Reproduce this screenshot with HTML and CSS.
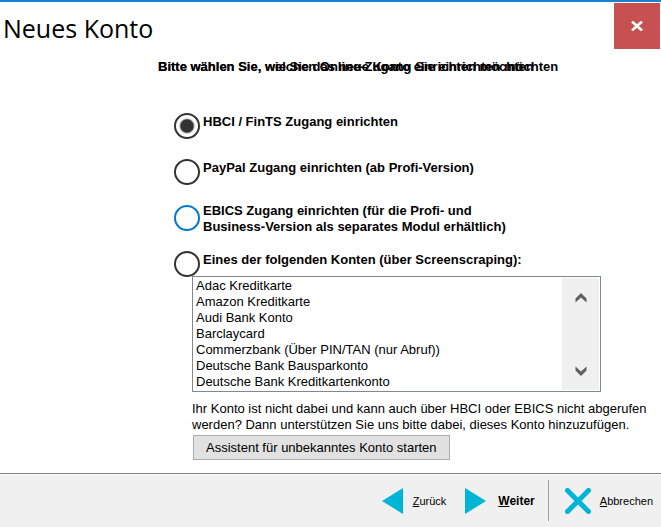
FILE: index.html
```html
<!DOCTYPE html>
<html lang="de">
<head>
  <meta charset="UTF-8">
  <title>Neues Konto</title>
  <link rel="stylesheet" href="styles.css">
</head>
<body>

  <header class="titlebar">
    <h1>Neues Konto</h1>
    <button class="close" type="button" aria-label="Schließen">
      <svg width="12" height="10" viewBox="0 0 12 10"><path d="M1 0.5L11 9.5M11 0.5L1 9.5" stroke="#fff" stroke-width="2.6"/></svg>
    </button>
  </header>

  <main>
    <!-- both page captions share one line -->
    <div class="captions">
      <p>Bitte wählen Sie, welchen Online-Zugang Sie einrichten möchten</p>
      <p>Bitte wählen Sie, wie Sie das neue Konto einrichten möchten</p>
    </div>

    <div class="options">
      <div class="option">
        <input type="radio" name="access" id="hbci" checked>
        <label for="hbci">HBCI / FinTS Zugang einrichten</label>
      </div>
      <div class="option">
        <input type="radio" name="access" id="paypal">
        <label for="paypal">PayPal Zugang einrichten (ab Profi-Version)</label>
      </div>
      <div class="option two-lines">
        <input type="radio" name="access" id="ebics" class="hot">
        <label for="ebics">EBICS Zugang einrichten (für die Profi- und<br>Business-Version als separates Modul erhältlich)</label>
      </div>
      <div class="option">
        <input type="radio" name="access" id="scraping">
        <label for="scraping" id="scraping-label">Eines der folgenden Konten (über Screenscraping):</label>
      </div>
    </div>

    <div class="accounts">
      <div class="listbox">
        <select size="7" aria-labelledby="scraping-label">
          <option>Adac Kreditkarte</option>
          <option>Amazon Kreditkarte</option>
          <option>Audi Bank Konto</option>
          <option>Barclaycard</option>
          <option>Commerzbank (Über PIN/TAN (nur Abruf))</option>
          <option>Deutsche Bank Bausparkonto</option>
          <option>Deutsche Bank Kreditkartenkonto</option>
        </select>
        <div class="scroller">
          <button type="button" aria-label="Nach oben">
            <svg width="12" height="10" viewBox="0 0 12 10"><path d="M0.5 5.5L6 0L11.5 5.5V9.5L6 4.5L0.5 9.5Z" fill="#606060"/></svg>
          </button>
          <button type="button" aria-label="Nach unten">
            <svg width="12" height="10" viewBox="0 0 12 10"><path d="M0.5 4.5L6 10L11.5 4.5V0.5L6 5.5L0.5 0.5Z" fill="#606060"/></svg>
          </button>
        </div>
      </div>
      <p class="hint">Ihr Konto ist nicht dabei und kann auch über HBCI oder EBICS nicht abgerufen<br>werden? Dann unterstützen Sie uns bitte dabei, dieses Konto hinzuzufügen.</p>
      <button class="assistant" type="button">Assistent für unbekanntes Konto starten</button>
    </div>
  </main>

  <footer class="toolbar">
    <button type="button">
      <svg width="22" height="26" viewBox="0 0 22 26"><path d="M0 13L21 0V26Z" fill="#00b4d8"/></svg>
      <span><u>Z</u>urück</span>
    </button>
    <button class="next" type="button">
      <svg width="22" height="26" viewBox="0 0 22 26"><path d="M21 13L0 0V26Z" fill="#00b4d8"/></svg>
      <span><u>W</u>eiter</span>
    </button>
    <button class="cancel" type="button">
      <svg width="26" height="26" viewBox="0 0 26 26"><path d="M2.5 2.5L23.5 23.5M23.5 2.5L2.5 23.5" stroke="#00b4d8" stroke-width="5" stroke-linecap="round"/></svg>
      <span><u>A</u>bbrechen</span>
    </button>
  </footer>

</body>
</html>
```
FILE: styles.css
```css
* {
  box-sizing: border-box;
}

body {
  display: flex;
  flex-direction: column;
  min-height: 100vh;
  margin: 0;
  border-top: 2px solid #1a80d8;
  background: #fff;
  color: #000;
  font: 13px/16px "Liberation Sans", Arial, sans-serif;
}

h1,
p {
  margin: 0;
}

button {
  padding: 0;
  border: none;
  background: none;
  color: inherit;
  font: inherit;
}

svg {
  display: block;
}

.titlebar {
  display: flex;
  justify-content: space-between;
  padding: 1px 1px 0 3px;
}

.titlebar h1 {
  font: 25px/50px "Open Sans", sans-serif;
}

.close {
  display: grid;
  place-items: center;
  width: 46px;
  height: 46px;
  background: #c75050;
}

main {
  flex: 1;
}

.captions {
  display: grid;
  padding: 6px 0 0 158px;
  font-weight: bold;
}

.captions p {
  grid-area: 1 / 1;
}

.options {
  display: grid;
  gap: 20px;
  padding: 38px 0 0 174px;
  font-weight: bold;
}

.option {
  display: flex;
  gap: 3px;
  height: 26px;
}

.option label {
  padding-top: 1px;
}

.two-lines {
  align-items: center;
}

.option input {
  appearance: none;
  flex: none;
  width: 26px;
  height: 26px;
  margin: 0;
  border: 2px solid #333;
  border-radius: 50%;
  background: #fff;
}

.option input:checked {
  background: radial-gradient(circle, #333 6px, #fff 8px);
}

.option input.hot {
  border-color: #0078d7;
}

.accounts {
  position: relative;
  margin: -1px 60px 12px 192px;
}

.listbox {
  display: flex;
  padding: 1px;
  border: 1px solid #828790;
  background: #fff;
}

.listbox select {
  flex: 1;
  min-width: 0;
  height: 112px;
  padding: 0;
  border: none;
  outline: none;
  background: #fff;
  color: #000;
  font: inherit;
  overflow: hidden;
}

.listbox option {
  min-height: 16px;
  padding: 0 2px;
  line-height: 16px;
}

.scroller {
  display: flex;
  flex-direction: column;
  justify-content: space-between;
  width: 37px;
  padding: 15px 0 14px;
  background: #f0f0f0;
}

.scroller button {
  display: grid;
  justify-content: center;
}

.hint {
  margin: 9px 0 2px;
  white-space: nowrap;
}

.assistant {
  height: 25px;
  margin-left: 1px;
  padding: 0 12px;
  border: 1px solid #adadad;
  background: #e1e1e1;
}

.toolbar {
  display: flex;
  justify-content: flex-end;
  align-items: center;
  gap: 19px;
  height: 54px;
  padding-right: 8px;
  border-top: 1px solid #808080;
  background: #f0f0f0;
  box-shadow: inset 0 1px #fff;
  font-size: 11px;
}

.toolbar button {
  display: flex;
  align-items: center;
  gap: 9px;
}

.toolbar .next {
  gap: 11px;
  font-size: 12px;
  font-weight: bold;
}

.toolbar .cancel {
  height: 41px;
  margin-left: -6px;
  padding-left: 16px;
  border-left: 1px solid #a0a0a0;
}
```
